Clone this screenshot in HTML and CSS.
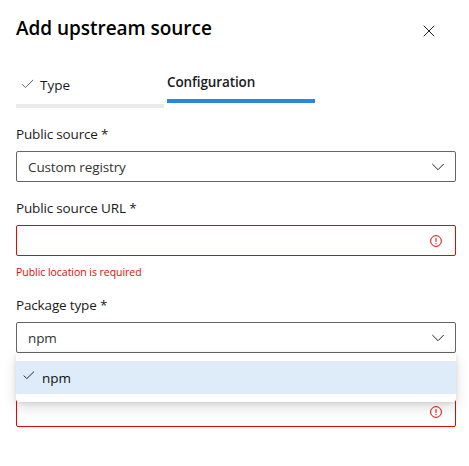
FILE: index.html
```html
<!DOCTYPE html>
<html lang="en">

<head>
    <meta charset="UTF-8">
    <meta name="viewport" content="width=device-width, initial-scale=1.0">
    <title>Add upstream source</title>
    <link rel="stylesheet" href="styles.css">
</head>

<body>
    <div class="panel">
        <div class="header">
            <h1>Add upstream source</h1>
            <button class="close" aria-label="Close">
                <svg width="12" height="12" viewBox="0 0 12 12"><path d="M.7.7l10.6 10.6M11.3.7L.7 11.3"/></svg>
            </button>
        </div>

        <div class="steps">
            <div class="step done">
                <svg class="check" width="14" height="10" viewBox="0 0 14 10"><path d="M1 5.2l3.4 3.4L12.2.8"/></svg>
                <span>Type</span>
            </div>
            <div class="step active">Configuration</div>
        </div>

        <div class="field">
            <label>Public source *</label>
            <div class="box">
                <span>Custom registry</span>
                <svg class="arrow" width="14" height="8" viewBox="0 0 14 8"><path d="M1.3 1L7 6.7 12.7 1"/></svg>
            </div>
        </div>

        <div class="field">
            <label>Public source URL *</label>
            <div class="box error">
                <svg class="warn" width="12" height="12" viewBox="0 0 12 12"><circle cx="6" cy="6" r="5.4"/><path d="M6 3v3.9M6 8v1.1"/></svg>
            </div>
            <div class="message">Public location is required</div>
        </div>

        <div class="field package">
            <label>Package type *</label>
            <div class="box">
                <span>npm</span>
                <svg class="arrow" width="14" height="8" viewBox="0 0 14 8"><path d="M1.3 1L7 6.7 12.7 1"/></svg>
            </div>
            <!-- dropdown list -->
            <div class="menu">
                <div class="option">
                    <svg class="check" width="12" height="9" viewBox="0 0 12 9"><path d="M.8 4.6l3 3L11 .6"/></svg>
                    <span>npm</span>
                </div>
            </div>
        </div>

        <div class="field">
            <div class="box error">
                <svg class="warn" width="12" height="12" viewBox="0 0 12 12"><circle cx="6" cy="6" r="5.4"/><path d="M6 3v3.9M6 8v1.1"/></svg>
            </div>
        </div>
    </div>
</body>

</html>
```
FILE: styles.css
```css
* {
    margin: 0;
    padding: 0;
    box-sizing: border-box;
}

body {
    background-color: #fff;
    color: #1b1b1b;
    font-family: "Open Sans", "Noto Sans", sans-serif;
    font-size: 13.5px;
    line-height: 20px;
}

svg {
    display: block;
    flex: none;
    fill: none;
    stroke: #222;
    stroke-width: 1;
}

.panel {
    width: 456px;
    height: 466px;
    padding: 14px 0 0 16px;
}

.header {
    display: flex;
    justify-content: space-between;
    height: 55px;
}

h1 {
    color: #000;
    font-size: 19px;
    font-weight: 600;
    line-height: 28px;
    letter-spacing: -0.04px;
}

.close {
    width: 32px;
    height: 32px;
    margin: 1px 11px 0 0;
    padding: 10px;
    border: 0;
    background: none;
}

.steps {
    display: flex;
    align-items: flex-start;
    gap: 3px;
    height: 56px;
}

.step {
    width: 148px;
    height: 34px;
    padding-top: 3px;
    border-bottom: 4px solid #2b88d8;
    font-weight: 600;
    letter-spacing: -0.12px;
}

.step.done {
    display: flex;
    height: 39px;
    padding: 6px 0 0 5px;
    border-color: #eaeaea;
    font-weight: 400;
    letter-spacing: 0;
}

.done .check {
    margin: 4px 5px 0 0;
    stroke: #666;
}

.field {
    margin-bottom: 17px;
}

label {
    display: block;
    height: 20px;
    margin-bottom: 6px;
    line-height: 18px;
    letter-spacing: -0.16px;
}

.box {
    display: flex;
    align-items: center;
    height: 31px;
    padding: 0 10px 0 11px;
    border: 1px solid #666;
    border-radius: 2px;
    color: #333;
    letter-spacing: -0.12px;
}

.box svg {
    margin-left: auto;
}

.box.error {
    padding-right: 13px;
    border-color: #e00b00;
}

.warn {
    stroke: #da0a00;
}

.message {
    margin: 8px 0 -1px;
    color: #e00b00;
    font-size: 10.5px;
    line-height: 16px;
    letter-spacing: -0.04px;
}

.package {
    position: relative;
    margin-bottom: 43px;
}

.menu {
    position: absolute;
    top: 57px;
    left: 0;
    width: 100%;
    padding: 8px 0;
    border-radius: 0 0 3px 3px;
    background-color: #fff;
    box-shadow: 0 6px 14px rgba(0, 0, 0, .13), 0 1px 4px rgba(0, 0, 0, .11);
}

.option {
    display: flex;
    align-items: center;
    height: 33px;
    padding: 1px 7px 0;
    background-color: #deecf9;
    color: #111;
}

.option .check {
    margin: -6px 7px 0 0;
}
```
